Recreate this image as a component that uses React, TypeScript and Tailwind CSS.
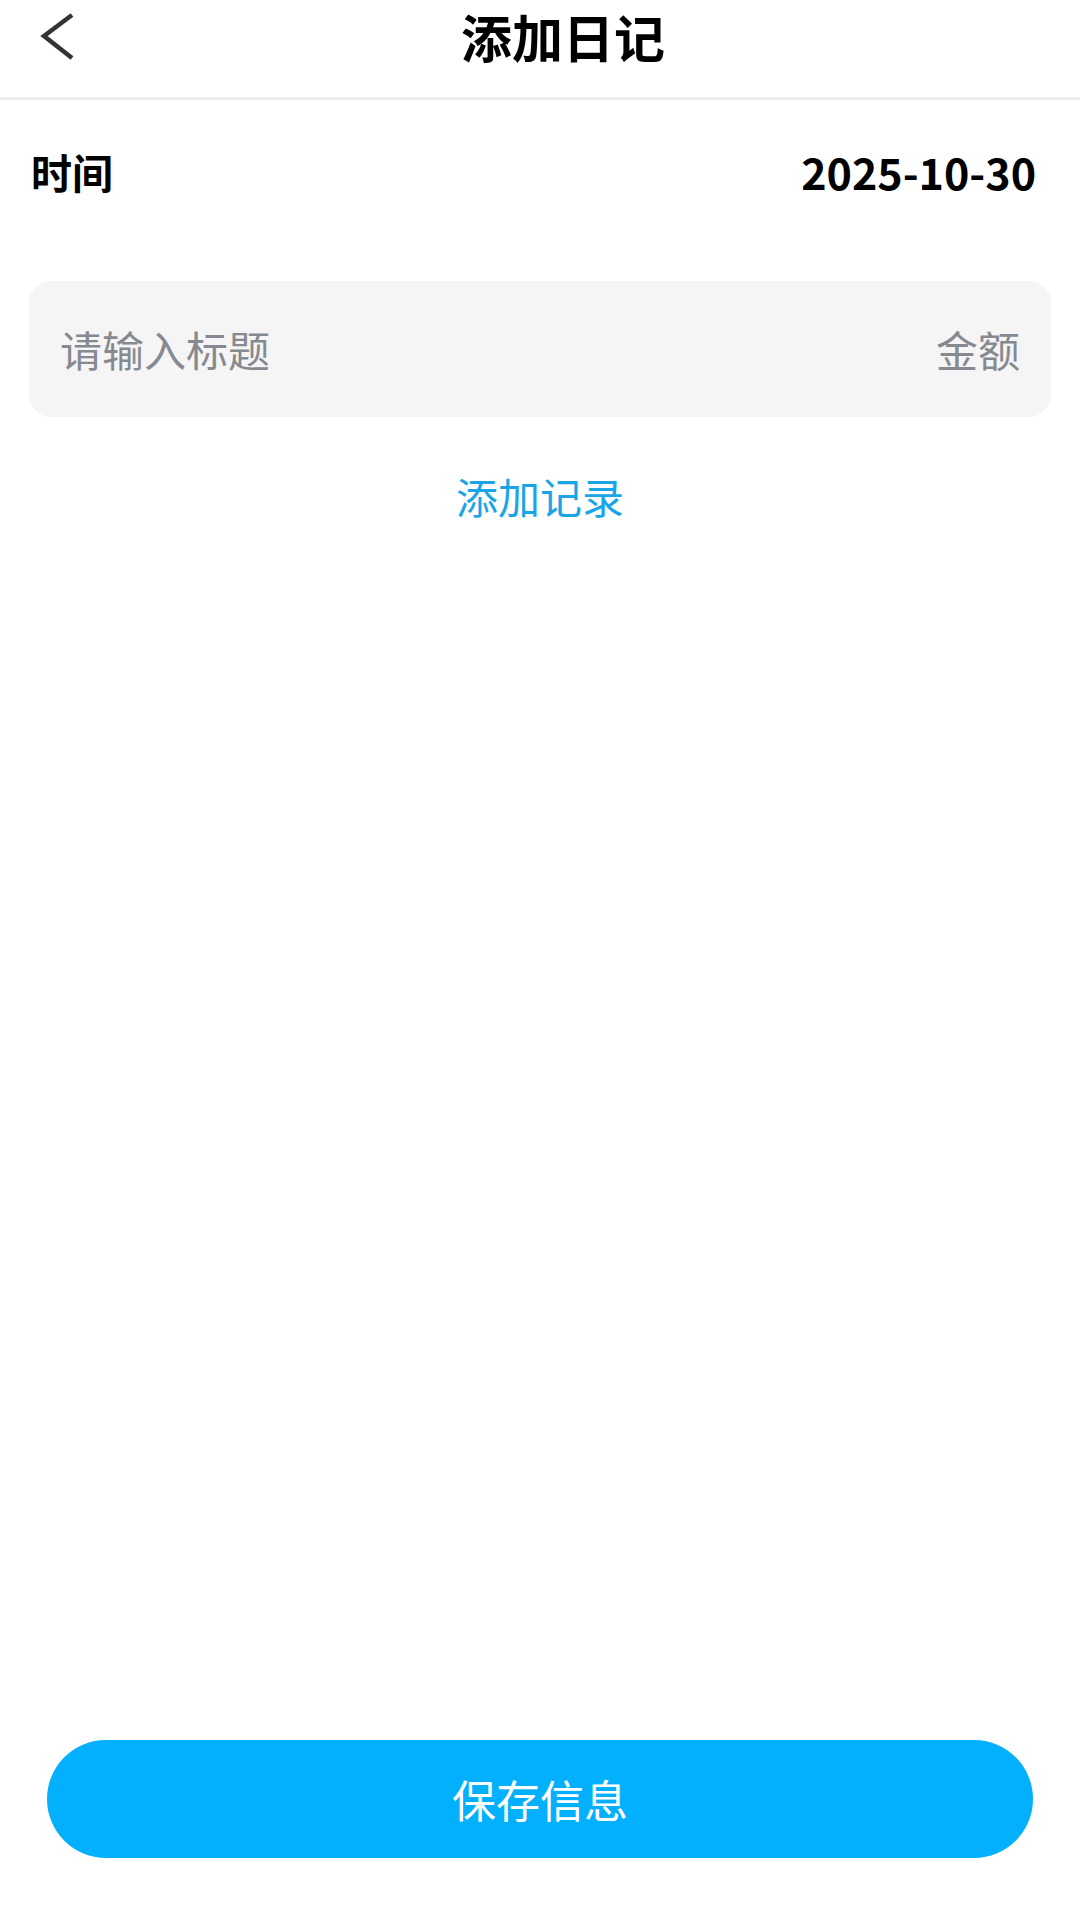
import React from "react";

export default function App() {
  const font = { fontFamily: '"Noto Sans CJK SC", "Noto Sans", sans-serif' };
  return (
    <div className="min-h-screen w-full bg-white flex flex-col" style={font}>
      {/* Header */}
      <div className="h-[100px] pb-[24px] grid grid-cols-[1fr_auto_1fr] items-center border-b-[3px] border-[#ececec]">
        <div className="pl-[36px] flex items-center">
          <svg width="44" height="56" viewBox="0 0 44 56" fill="none">
            <path d="M36 6 L8 27 L36 49" stroke="#333333" strokeWidth="4.5" strokeLinecap="butt" strokeLinejoin="miter" />
          </svg>
        </div>
        <div className="pl-[46px] text-[51px] font-bold text-black leading-none">添加日记</div>
        <div />
      </div>

      {/* Time row */}
      <div className="h-[142px] flex items-center justify-between pl-[31px] pr-[44px]">
        <span className="text-[41px] font-bold text-black leading-none">时间</span>
        <span className="text-[43px] font-bold text-black leading-none">2025-10-30</span>
      </div>

      {/* Input box */}
      <div className="mt-[39px] mx-[29px] h-[136px] rounded-[22px] bg-[#f5f5f5] flex items-center justify-between px-[31px]">
        <span className="text-[42px] text-[#868a90] leading-none">请输入标题</span>
        <span className="text-[42px] text-[#868a90] leading-none">金额</span>
      </div>

      {/* Add record */}
      <div className="mt-[58px] flex justify-center">
        <span className="text-[42px] text-[#1aa6e6] leading-none">添加记录</span>
      </div>

      <div className="flex-1" />

      {/* Save button */}
      <div className="px-[47px] pb-[62px]">
        <button className="w-full h-[118px] rounded-full bg-[#03b0fd] flex items-center justify-center">
          <span className="text-[44px] text-white leading-none">保存信息</span>
        </button>
      </div>
    </div>
  );
}
